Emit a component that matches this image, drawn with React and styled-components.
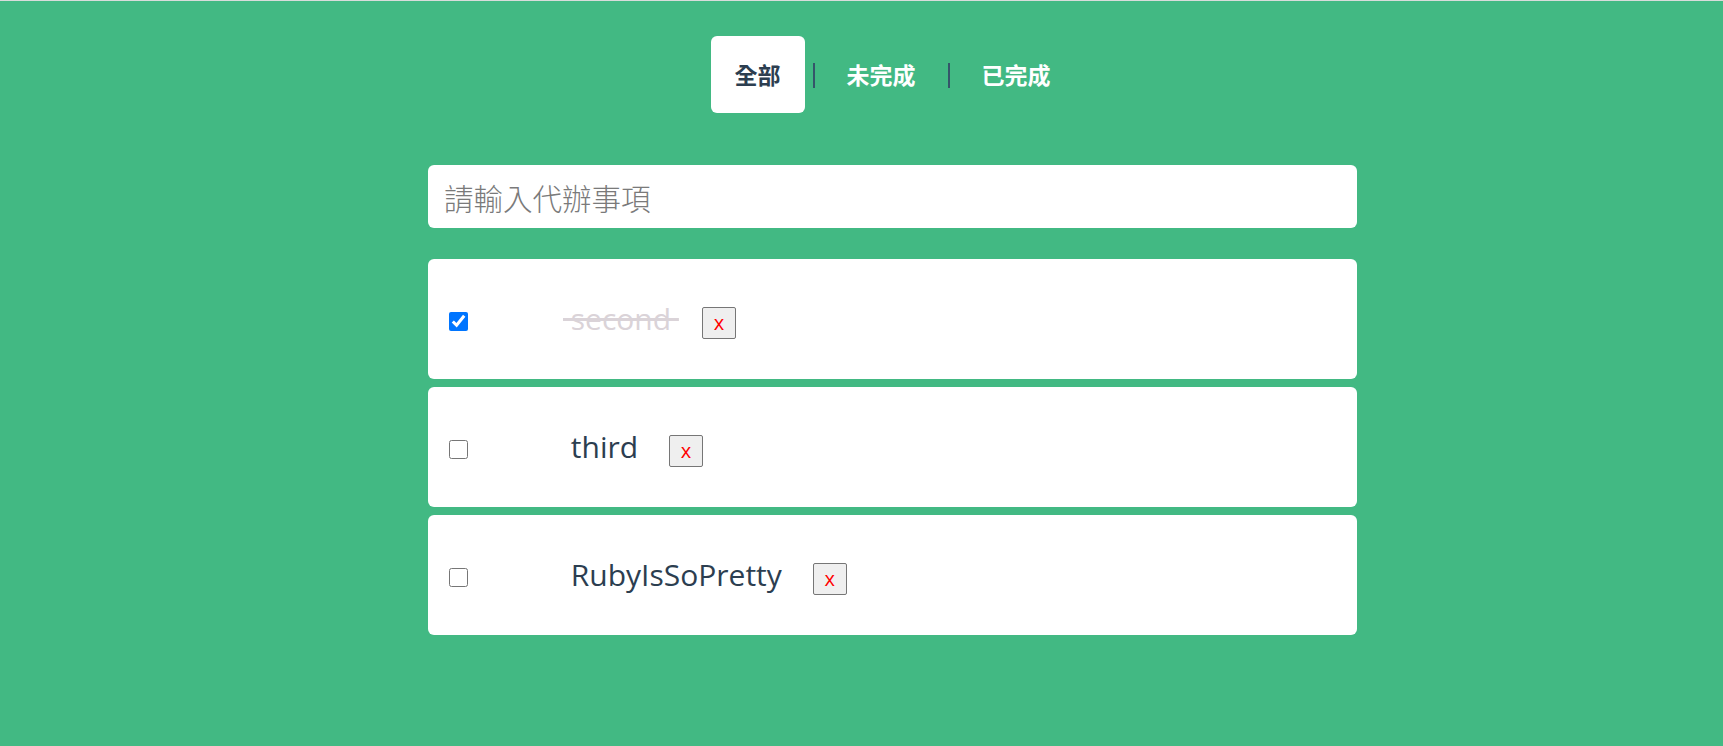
import React, { useState } from 'react'
import styled, { createGlobalStyle } from 'styled-components'

const GlobalStyle = createGlobalStyle`
  html, body {
    margin: 0;
    padding: 0;
  }
  body {
    background: #42b983;
    border-top: 1px solid #d9dcdb;
    min-height: 745px;
    font-family: "Open Sans", "Noto Sans CJK TC", sans-serif;
    color: #2c3e50;
  }
`

const Page = styled.div`
  display: flex;
  flex-direction: column;
  align-items: center;
  padding: 35px 0 0 62px;
`

const Tabs = styled.nav`
  display: flex;
  align-items: center;
`

const Tab = styled.a`
  display: block;
  padding: 20px 24px;
  border-radius: 6px;
  font-family: "Noto Sans CJK TC", sans-serif;
  font-size: 23px;
  font-weight: 700;
  line-height: 37px;
  cursor: pointer;
  color: ${p => (p.$active ? '#2c3e50' : '#ffffff')};
  background: ${p => (p.$active ? '#ffffff' : 'transparent')};
`

const Divider = styled.span`
  width: 2px;
  height: 25px;
  margin: 2px 8px 0;
  background: #35556a;
`

const Input = styled.input`
  box-sizing: border-box;
  width: 929px;
  height: 63px;
  margin-top: 52px;
  padding: 0 16px;
  border: none;
  border-radius: 6px;
  outline: none;
  font-family: "Noto Sans CJK TC", sans-serif;
  font-size: 29.5px;
  font-weight: 300;
  color: #2c3e50;
  &::placeholder {
    color: #7a7a7a;
  }
`

const List = styled.ul`
  display: flex;
  flex-direction: column;
  gap: 8px;
  margin: 31px 0 0;
  padding: 0;
  list-style: none;
`

const Item = styled.li`
  box-sizing: border-box;
  display: flex;
  align-items: center;
  width: 929px;
  height: 120px;
  padding-left: 21px;
  background: #ffffff;
  border-radius: 6px;
`

const Check = styled.input`
  width: 19px;
  height: 19px;
  margin: 5px 0 0;
`

const Label = styled.div`
  display: flex;
  align-items: baseline;
  margin-left: 95px;
`

const Text = styled.span`
  white-space: pre;
  font-size: 30px;
  line-height: 40px;
  color: ${p => (p.$done ? '#dad3d8' : '#2c3e50')};
  text-decoration: ${p => (p.$done ? 'line-through' : 'none')};
`

const DeleteBtn = styled.button`
  width: 34px;
  height: 32px;
  margin-left: 23px;
  padding: 0;
  border: 1px solid #767676;
  border-radius: 2px;
  background: #efefef;
  color: #ff0000;
  font-family: "Open Sans", sans-serif;
  font-size: 20px;
  line-height: 28px;
`

export default function App() {
  const [todos, setTodos] = useState([
    { id: 1, text: 'second', done: true },
    { id: 2, text: 'third', done: false },
    { id: 3, text: 'RubyIsSoPretty', done: false },
  ])

  const toggle = id =>
    setTodos(todos.map(t => (t.id === id ? { ...t, done: !t.done } : t)))

  return (
    <>
      <GlobalStyle />
      <Page>
        <Tabs>
          <Tab $active>全部</Tab>
          <Divider />
          <Tab>未完成</Tab>
          <Divider />
          <Tab>已完成</Tab>
        </Tabs>
        <Input placeholder="請輸入代辦事項" />
        <List>
          {todos.map(t => (
            <Item key={t.id}>
              <Check type="checkbox" checked={t.done} onChange={() => toggle(t.id)} />
              <Label>
                <Text $done={t.done}>{` ${t.text} `}</Text>
                <DeleteBtn>x</DeleteBtn>
              </Label>
            </Item>
          ))}
        </List>
      </Page>
    </>
  )
}
